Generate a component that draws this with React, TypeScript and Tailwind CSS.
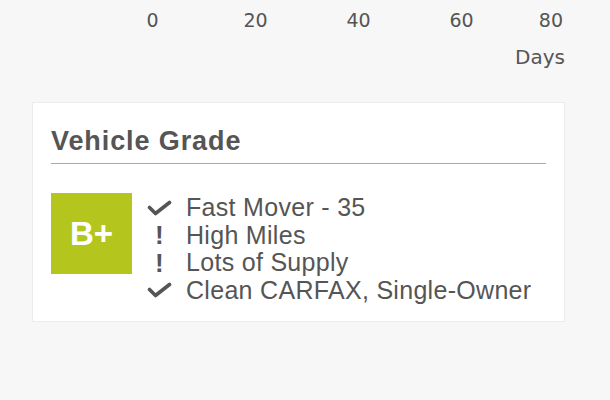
const ticks = ["0", "20", "40", "60"];

const factors = [
  { kind: "good", label: "Fast Mover - 35" },
  { kind: "warn", label: "High Miles" },
  { kind: "warn", label: "Lots of Supply" },
  { kind: "good", label: "Clean CARFAX, Single-Owner" },
];

function FactorIcon({ kind }: { kind: string }) {
  if (kind === "good") {
    return (
      <svg width="25" height="16" viewBox="0 0 25 16" className="text-[#555]">
        <polyline
          points="2.5,7.5 8.5,13.5 22.5,2.5"
          fill="none"
          stroke="currentColor"
          strokeWidth="3.6"
          strokeLinecap="round"
          strokeLinejoin="round"
        />
      </svg>
    );
  }
  return (
    <span className="text-[26px] font-black leading-none text-[#555]">!</span>
  );
}

export default function App() {
  return (
    <div className="h-[400px] w-[610px] overflow-hidden bg-[#f7f7f7] font-['Liberation_Sans',Arial,sans-serif]">
      {/* chart axis */}
      <div className="flex pt-[8px] pl-[101px] pr-[47px] font-['DejaVu_Sans',sans-serif] text-[19px] leading-[24px] text-[#555]">
        {ticks.map((t) => (
          <span key={t} className="w-[103px] text-center">
            {t}
          </span>
        ))}
        <span className="flex-1 text-right">80</span>
      </div>
      <div className="mt-[13px] pr-[45px] text-right font-['DejaVu_Sans',sans-serif] text-[20px] leading-[24px] text-[#555]">
        Days
      </div>

      {/* grade card */}
      <div className="mt-[33px] ml-[32px] h-[220px] w-[533px] border border-[#ececec] bg-white px-[18px] pt-[22px]">
        <h2 className="border-b border-[#aaa] pb-[6px] text-[27px] font-bold leading-[32px] tracking-[0.9px] text-[#555]">
          Vehicle Grade
        </h2>
        <div className="mt-[29px] flex gap-[14px]">
          <div className="flex h-[81px] w-[81px] items-center justify-center bg-[#b4c61e] text-[33px] font-bold text-white">
            B+
          </div>
          <ul className="mt-[1px] flex flex-col">
            {factors.map((f) => (
              <li
                key={f.label}
                className="flex items-center text-[25px] leading-[27.5px] tracking-[0.3px] text-[#555]"
              >
                <span className="flex w-[27px] justify-center">
                  <FactorIcon kind={f.kind} />
                </span>
                <span className="ml-[13px]">{f.label}</span>
              </li>
            ))}
          </ul>
        </div>
      </div>
    </div>
  );
}
